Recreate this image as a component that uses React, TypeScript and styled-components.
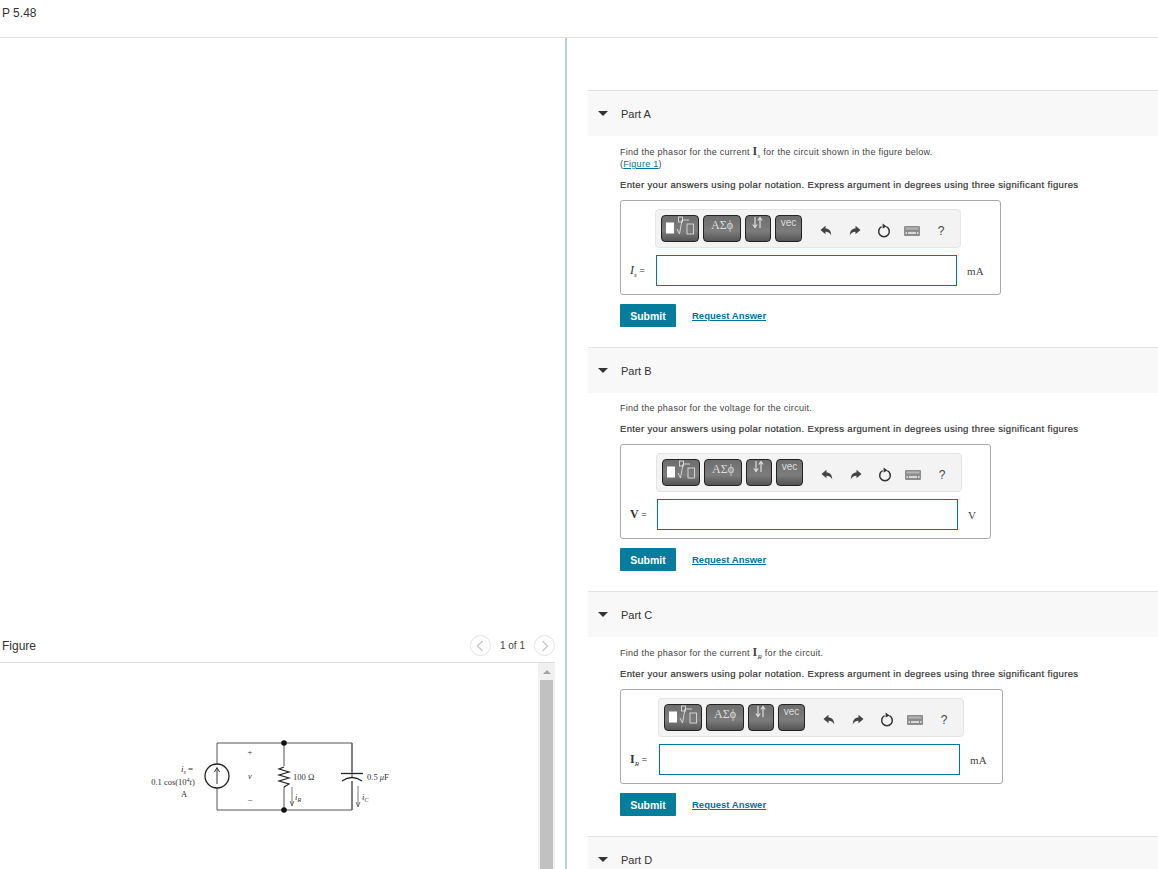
import React from 'react';
import styled, { createGlobalStyle } from 'styled-components';

const GlobalStyle = createGlobalStyle`
  html, body {
    margin: 0;
    height: 100%;
    overflow: hidden;
    background: #fff;
  }
  body {
    font-family: "Liberation Sans", Arial, sans-serif;
    color: #333;
  }
`;

const Undo = () => (
  <svg width="12" height="12" viewBox="0 0 12 12">
    <path d="M0.5 5 L5.5 0.8 V3.4 C9 3.4 11.2 5.6 11.2 10.6 C10 8 8.4 6.8 5.5 6.8 V9.2 Z" fill="#444" />
  </svg>
);

const Redo = () => (
  <svg width="12" height="12" viewBox="0 0 12 12">
    <path d="M11.5 5 L6.5 0.8 V3.4 C3 3.4 0.8 5.6 0.8 10.6 C2 8 3.6 6.8 6.5 6.8 V9.2 Z" fill="#444" />
  </svg>
);

const Reset = () => (
  <svg width="14" height="15" viewBox="0 0 14 15">
    <path d="M4.6 3.6 A5.3 5.3 0 1 0 9.4 3.6" fill="none" stroke="#333" strokeWidth="1.5" />
    <path d="M5.6 0.4 L9.6 3.4 L5.6 5.6 Z" fill="#333" />
  </svg>
);

const Keyboard = () => (
  <svg width="16" height="10" viewBox="0 0 16 10">
    <rect x="0" y="0" width="16" height="10" rx="1" fill="#8d8d8d" />
    <rect x="1.5" y="1.5" width="13" height="2" fill="#b5b5b5" />
    <rect x="4" y="6" width="8" height="2" fill="#d8d8d8" />
    <rect x="1.5" y="6" width="1.5" height="2" fill="#d8d8d8" />
    <rect x="13" y="6" width="1.5" height="2" fill="#d8d8d8" />
  </svg>
);

const Templates = () => (
  <svg width="36" height="26" viewBox="0 0 36 26">
    <rect x="4" y="6.5" width="8" height="11" fill="#fff" />
    <path d="M15 13 L17.5 18 L20 4 H27" fill="none" stroke="#ddd" strokeWidth="0.9" />
    <rect x="16.5" y="1" width="4" height="5" fill="none" stroke="#ddd" strokeWidth="0.9" />
    <rect x="25" y="8" width="6.5" height="10" fill="none" stroke="#ddd" strokeWidth="0.9" />
  </svg>
);

const Arrows = () => (
  <svg width="14" height="14" viewBox="0 0 14 14">
    <path d="M4 1 V11 M1.8 8.5 L4 11.5 L6.2 8.5" fill="none" stroke="#ddd" strokeWidth="1.2" />
    <path d="M9 12 V2 M6.8 4.5 L9 1.5 L11.2 4.5" fill="none" stroke="#ddd" strokeWidth="1.2" />
  </svg>
);

const Circuit = () => (
  <svg width="270" height="90" viewBox="140 735 270 90">
    <g fill="none" stroke="#555" strokeWidth="1">
      <path d="M217 764 V743 H352 V810 H217 V788" />
      <path d="M284 743 V766 M284 787 V810" />
      <path d="M352 743 V772 M352 780 V810" />
    </g>
    <circle cx="217" cy="776" r="12" fill="#fff" stroke="#222" strokeWidth="1.3" />
    <path d="M217 784 V769 M214.5 772 L217 767.5 L219.5 772" fill="none" stroke="#333" strokeWidth="1" />
    <path d="M284 767 L279 769 L289 772 L279 775 L289 778 L279 781 L289 784 L284 787" fill="none" stroke="#222" strokeWidth="1.2" />
    <circle cx="284" cy="743" r="2.8" fill="#111" />
    <circle cx="284" cy="810" r="2.8" fill="#111" />
    <path d="M341 773.5 H363" stroke="#222" strokeWidth="1.3" />
    <path d="M342 781 Q352 774 362 781" fill="#fff" stroke="#222" strokeWidth="1.3" />
    <path d="M292 787 V805 M290 801 L292 806 L294 801" fill="none" stroke="#555" strokeWidth="0.8" />
    <path d="M358 786 V806 M356 802 L358 807 L360 802" fill="none" stroke="#555" strokeWidth="0.8" />
    <g fontFamily="'Liberation Serif', serif" fontSize="8.5" fill="#333">
      <text x="187" y="772" fontStyle="italic" textAnchor="middle" fontSize="9">i<tspan fontSize="6" dy="1.5">s</tspan><tspan dy="-1.5" fontStyle="normal"> =</tspan></text>
      <text x="173" y="785" textAnchor="middle">0.1 cos(10<tspan fontSize="6" dy="-3">4</tspan><tspan dy="3" fontStyle="italic">t</tspan>)</text>
      <text x="184" y="797" textAnchor="middle">A</text>
      <text x="250" y="755" textAnchor="middle">+</text>
      <text x="250" y="779" textAnchor="middle" fontStyle="italic">v</text>
      <text x="250" y="802" textAnchor="middle">–</text>
      <text x="293" y="780">100 Ω</text>
      <text x="367" y="780">0.5 <tspan fontStyle="italic">μ</tspan>F</text>
      <text x="295" y="800" fontStyle="italic">i<tspan fontSize="6" dy="1.5">R</tspan></text>
      <text x="362" y="800" fontStyle="italic">i<tspan fontSize="6" dy="1.5">C</tspan></text>
    </g>
  </svg>
);

type PartData = {
  title: string;
  question: React.ReactNode;
  label: React.ReactNode;
  unit: string;
  boxWidth: number;
  labelWidth: number;
  showFigureLink?: boolean;
};

export default function App() {
  return (
    <Page>
      <GlobalStyle />
      <TopBar>P 5.48</TopBar>
      <Main>
        <LeftPane>
          <FigureHead>
            <FigureTitle>Figure</FigureTitle>
            <Pager>
              <PagerButton>
                <svg width="8" height="12" viewBox="0 0 8 12">
                  <path d="M6.5 1 L1.5 6 L6.5 11" fill="none" stroke="#ccc" strokeWidth="1.6" />
                </svg>
              </PagerButton>
              <PagerText>1 of 1</PagerText>
              <PagerButton>
                <svg width="8" height="12" viewBox="0 0 8 12">
                  <path d="M1.5 1 L6.5 6 L1.5 11" fill="none" stroke="#ccc" strokeWidth="1.6" />
                </svg>
              </PagerButton>
            </Pager>
          </FigureHead>
          <FigureBody>
            <FigureCanvas>
              <Circuit />
            </FigureCanvas>
            <ScrollTrack>
              <ScrollUp />
              <ScrollThumb />
            </ScrollTrack>
          </FigureBody>
        </LeftPane>
        <RightPane>
          {getParts().map((part) => (
            <Part key={part.title}>
              <PartHead>
                <Caret />
                {part.title}
              </PartHead>
              <PartBody>
                <Question>{part.question}</Question>
                {part.showFigureLink && (
                  <FigureRef>
                    (<a href="#figure">Figure 1</a>)
                  </FigureRef>
                )}
                <Instruction>
                  Enter your answers using polar notation. Express argument in degrees using three significant figures
                </Instruction>
                <AnswerBox $width={part.boxWidth}>
                  <Toolbar $left={part.labelWidth}>
                    <MathButton $w={38}>
                      <Templates />
                    </MathButton>
                    <MathButton $w={38}>
                      <GreekText>ΑΣϕ</GreekText>
                    </MathButton>
                    <MathButton $w={26}>
                      <Arrows />
                    </MathButton>
                    <MathButton $w={27}>
                      <VecText>vec</VecText>
                    </MathButton>
                    <ToolIcons>
                      <ToolIcon><Undo /></ToolIcon>
                      <ToolIcon><Redo /></ToolIcon>
                      <ToolIcon><Reset /></ToolIcon>
                      <ToolIcon><Keyboard /></ToolIcon>
                      <ToolIcon><Help>?</Help></ToolIcon>
                    </ToolIcons>
                  </Toolbar>
                  <AnswerRow>
                    <AnswerLabel $w={part.labelWidth}>{part.label}</AnswerLabel>
                    <AnswerInput />
                    <Unit>{part.unit}</Unit>
                  </AnswerRow>
                </AnswerBox>
                <Actions>
                  <SubmitButton>Submit</SubmitButton>
                  <RequestLink href="#request">Request Answer</RequestLink>
                </Actions>
              </PartBody>
            </Part>
          ))}
          <Part>
            <PartHead>
              <Caret />
              Part D
            </PartHead>
          </Part>
        </RightPane>
      </Main>
    </Page>
  );
}

const Page = styled.div`
  height: 869px;
  display: flex;
  flex-direction: column;
  overflow: hidden;
`;

const TopBar = styled.div`
  flex: none;
  height: 38px;
  padding: 6px 0 0 2px;
  box-sizing: border-box;
  border-bottom: 1px solid #e0e0e0;
  font-size: 12px;
  line-height: 15px;
  color: #333;
`;

const Main = styled.div`
  flex: 1;
  display: flex;
  min-height: 0;
`;

const LeftPane = styled.div`
  width: 565px;
  flex: none;
  display: flex;
  flex-direction: column;
  justify-content: flex-end;
  border-right: 2px solid #b9d0e0;
`;

const FigureHead = styled.div`
  height: 33px;
  margin-right: 10px;
  display: flex;
  align-items: center;
  justify-content: space-between;
  border-bottom: 1px solid #ddd;
`;

const FigureTitle = styled.div`
  margin-left: 2px;
  font-size: 12px;
  color: #333;
`;

const Pager = styled.div`
  display: flex;
  align-items: center;
  gap: 9px;
`;

const PagerButton = styled.div`
  width: 19px;
  height: 19px;
  border: 1px solid #e2e2e2;
  border-radius: 50%;
  display: flex;
  align-items: center;
  justify-content: center;
`;

const PagerText = styled.div`
  font-size: 10px;
  color: #444;
`;

const FigureBody = styled.div`
  height: 206px;
  margin-right: 10px;
  display: flex;
  justify-content: space-between;
`;

const FigureCanvas = styled.div`
  padding: 72px 0 0 140px;
`;

const ScrollTrack = styled.div`
  width: 17px;
  background: #f1f1f1;
  display: flex;
  flex-direction: column;
  align-items: center;
`;

const ScrollUp = styled.div`
  margin-top: 7px;
  border-left: 4px solid transparent;
  border-right: 4px solid transparent;
  border-bottom: 4px solid #a3a3a3;
`;

const ScrollThumb = styled.div`
  margin-top: 6px;
  width: 13px;
  flex: 1;
  background: #c1c1c1;
`;

const RightPane = styled.div`
  flex: 1;
  min-width: 0;
  padding: 52px 0 0 21px;
  display: flex;
  flex-direction: column;
`;

const Part = styled.section`
  flex: none;
`;

const PartHead = styled.div`
  height: 46px;
  box-sizing: border-box;
  display: flex;
  align-items: center;
  padding-left: 10px;
  background: #f8f8f8;
  font-size: 11px;
  color: #333;
  border-top: 1px solid #e2e2e2;
`;

const Caret = styled.span`
  width: 0;
  height: 0;
  margin-right: 13px;
  border-left: 5px solid transparent;
  border-right: 5px solid transparent;
  border-top: 5px solid #333;
`;

const PartBody = styled.div`
  padding: 9px 0 20px 32px;
`;

const Question = styled.div`
  font-size: 9px;
  line-height: 12px;
  letter-spacing: 0.28px;
  color: #444;
`;

const Bold = styled.b`
  font-family: "Liberation Serif", serif;
  font-size: 12px;
`;

const ItalicVar = styled.i`
  font-family: "Liberation Serif", serif;
  font-size: 12px;
`;

const Sub = styled.sub`
  font-family: "Liberation Serif", serif;
  font-style: italic;
  font-size: 7px;
  line-height: 0;
`;

const FigureRef = styled.div`
  font-size: 9px;
  line-height: 12px;
  letter-spacing: 0.28px;
  color: #444;
  a {
    color: #00749a;
  }
`;

const Instruction = styled.div`
  margin-top: 9px;
  font-size: 9.5px;
  line-height: 12px;
  letter-spacing: 0.36px;
  color: #333;
  -webkit-text-stroke: 0.2px #333;
`;

const AnswerBox = styled.div<{ $width: number }>`
  width: ${(p) => p.$width}px;
  height: 95px;
  margin-top: 9px;
  box-sizing: border-box;
  border: 1px solid #aaa;
  border-radius: 3px;
  padding-top: 8px;
`;

const Toolbar = styled.div<{ $left: number }>`
  width: 306px;
  height: 39px;
  margin-left: ${(p) => p.$left - 1}px;
  box-sizing: border-box;
  background: #f3f3f3;
  border: 1px solid #e4e4e4;
  border-radius: 4px;
  display: flex;
  align-items: center;
  padding-left: 5px;
  gap: 4px;
`;

const MathButton = styled.div<{ $w: number }>`
  width: ${(p) => p.$w}px;
  height: 27px;
  flex: none;
  box-sizing: border-box;
  border: 1px solid #222;
  border-radius: 4px;
  background: linear-gradient(#6e6e6e, #7c7c7c 60%, #555);
  color: #ddd;
  display: flex;
  justify-content: center;
  overflow: hidden;
`;

const GreekText = styled.span`
  font-family: "Liberation Serif", serif;
  font-size: 12px;
  line-height: 18px;
`;

const VecText = styled.span`
  font-size: 10px;
  line-height: 13px;
`;

const ToolIcons = styled.div`
  flex: 1;
  display: flex;
  justify-content: space-between;
  align-items: center;
  padding: 4px 9px 0 10px;
`;

const ToolIcon = styled.div`
  width: 20px;
  display: flex;
  justify-content: center;
`;

const Help = styled.span`
  font-size: 12px;
  color: #444;
`;

const AnswerRow = styled.div`
  margin-top: 7px;
  display: flex;
  align-items: center;
`;

const AnswerLabel = styled.div<{ $w: number }>`
  width: ${(p) => p.$w}px;
  box-sizing: border-box;
  padding-left: 9px;
  font-family: "Liberation Serif", serif;
  font-size: 10px;
  color: #333;
`;

const AnswerInput = styled.div`
  width: 301px;
  height: 31px;
  box-sizing: border-box;
  border: 1px solid #00789c;
`;

const Unit = styled.div`
  margin-left: 10px;
  font-family: "Liberation Serif", serif;
  font-size: 11px;
  letter-spacing: 0.3px;
  color: #444;
`;

const Actions = styled.div`
  margin-top: 9px;
  display: flex;
  align-items: center;
  gap: 16px;
`;

const SubmitButton = styled.div`
  width: 56px;
  height: 23px;
  background: #047c9c;
  color: #fff;
  font-size: 10.5px;
  font-weight: bold;
  display: flex;
  align-items: center;
  justify-content: center;
  border-radius: 1px;
`;

const RequestLink = styled.a`
  font-size: 9.5px;
  font-weight: bold;
  color: #00749a;
`;

function getParts(): PartData[] {
  return [
    {
      title: 'Part A',
      question: (
        <>
          Find the phasor for the current <Bold>I</Bold><Sub>s</Sub> for the circuit shown in the figure below.
        </>
      ),
      label: (
        <>
          <ItalicVar>I</ItalicVar><Sub>s</Sub> =
        </>
      ),
      unit: 'mA',
      boxWidth: 381,
      labelWidth: 35,
      showFigureLink: true,
    },
    {
      title: 'Part B',
      question: 'Find the phasor for the voltage for the circuit.',
      label: (
        <>
          <Bold>V</Bold> =
        </>
      ),
      unit: 'V',
      boxWidth: 371,
      labelWidth: 36,
    },
    {
      title: 'Part C',
      question: (
        <>
          Find the phasor for the current <Bold>I</Bold><Sub>R</Sub> for the circuit.
        </>
      ),
      label: (
        <>
          <Bold>I</Bold><Sub>R</Sub> =
        </>
      ),
      unit: 'mA',
      boxWidth: 383,
      labelWidth: 38,
    },
  ];
}
